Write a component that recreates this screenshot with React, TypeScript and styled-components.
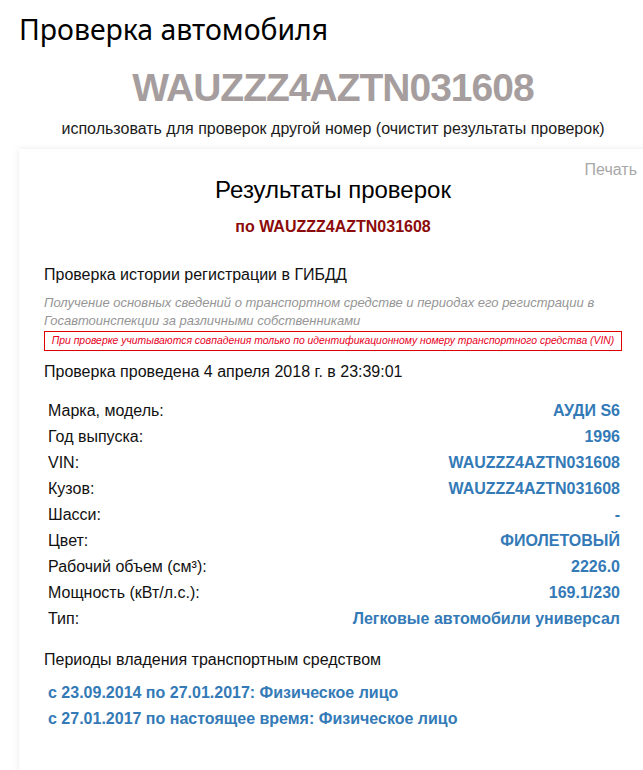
import styled, { createGlobalStyle } from "styled-components";

const Global = createGlobalStyle`
  html, body {
    margin: 0;
    padding: 0;
    background: #fff;
    overflow-x: hidden;
  }
  body {
    font-family: "Liberation Sans", Arial, sans-serif;
    color: #111;
  }
`;

const Page = styled.div`
  padding: 0 0 40px 19px;
  width: 628px;
`;

const Title = styled.h1`
  margin: 11px 0 0;
  font-family: "Noto Sans", "Open Sans", sans-serif;
  font-weight: 400;
  font-size: 28.4px;
  line-height: 36px;
  color: #000;
`;

const Vin = styled.div`
  margin-top: 18px;
  text-align: center;
  font-weight: 700;
  font-size: 39px;
  letter-spacing: -1px;
  line-height: 46px;
  color: #a69e9e;
`;

const Reset = styled.div`
  margin-top: 8px;
  text-align: center;
  font-size: 16px;
  line-height: 20px;
  color: #1a1a1a;
`;

const Card = styled.section`
  position: relative;
  margin-top: 10px;
  background: #fff;
  box-shadow: 0 0 7px rgba(0, 0, 0, 0.09);
  padding: 27px 25px 60px;
  display: flex;
  flex-direction: column;
`;

const PrintLink = styled.a`
  position: absolute;
  top: 11px;
  right: 10px;
  font-size: 16px;
  line-height: 20px;
  color: #a8a8a8;
  text-decoration: none;
  cursor: pointer;
`;

const CardTitle = styled.h2`
  margin: 0;
  text-align: center;
  font-weight: 400;
  font-size: 24px;
  line-height: 28px;
  color: #000;
`;

const CardSub = styled.div`
  margin-top: 13px;
  text-align: center;
  font-weight: 700;
  font-size: 16px;
  line-height: 20px;
  color: #8b0a0a;
`;

const SectionTitle = styled.div<{ $top: number }>`
  margin-top: ${(p) => p.$top}px;
  font-size: 16px;
  line-height: 20px;
  color: #111;
`;

const Note = styled.p`
  margin: 9px 0 0;
  font-style: italic;
  font-size: 13px;
  line-height: 18px;
  color: #959595;
`;

const Warning = styled.div`
  margin-top: 1px;
  border: 1px solid #e00000;
  padding: 3px 6px;
  text-align: center;
  font-style: italic;
  font-size: 10.4px;
  line-height: 12px;
  color: #e8001c;
  white-space: nowrap;
`;

const Checked = styled.div`
  margin-top: 11px;
  font-size: 16px;
  line-height: 20px;
  color: #111;
`;

const Table = styled.div`
  margin-top: 16px;
  padding: 0 2px 0 4px;
  display: flex;
  flex-direction: column;
`;

const Row = styled.div`
  display: flex;
  justify-content: space-between;
  font-size: 16px;
  line-height: 26px;
`;

const Label = styled.span`
  color: #111;
`;

const Value = styled.span`
  font-weight: 700;
  color: #337ab7;
`;

const Periods = styled.div`
  margin-top: 10px;
  padding-left: 4px;
  display: flex;
  flex-direction: column;
`;

const Period = styled.div`
  font-weight: 700;
  font-size: 16px;
  line-height: 26px;
  color: #337ab7;
`;

const vin = "WAUZZZ4AZTN031608";

const rows: [string, string][] = [
  ["Марка, модель:", "АУДИ S6"],
  ["Год выпуска:", "1996"],
  ["VIN:", vin],
  ["Кузов:", vin],
  ["Шасси:", "-"],
  ["Цвет:", "ФИОЛЕТОВЫЙ"],
  ["Рабочий объем (см³):", "2226.0"],
  ["Мощность (кВт/л.с.):", "169.1/230"],
  ["Тип:", "Легковые автомобили универсал"],
];

const periods = [
  "с 23.09.2014 по 27.01.2017: Физическое лицо",
  "с 27.01.2017 по настоящее время: Физическое лицо",
];

export default function App() {
  return (
    <>
      <Global />
      <Page>
        <Title>Проверка автомобиля</Title>
        <Vin>{vin}</Vin>
        <Reset>использовать для проверок другой номер (очистит результаты проверок)</Reset>
        <Card>
          <PrintLink>Печать</PrintLink>
          <CardTitle>Результаты проверок</CardTitle>
          <CardSub>по {vin}</CardSub>
          <SectionTitle $top={28}>Проверка истории регистрации в ГИБДД</SectionTitle>
          <Note>
            Получение основных сведений о транспортном средстве и периодах его регистрации в
            Госавтоинспекции за различными собственниками
          </Note>
          <Warning>
            При проверке учитываются совпадения только по идентификационному номеру транспортного
            средства (VIN)
          </Warning>
          <Checked>Проверка проведена 4 апреля 2018 г. в 23:39:01</Checked>
          <Table>
            {rows.map(([l, v]) => (
              <Row key={l}>
                <Label>{l}</Label>
                <Value>{v}</Value>
              </Row>
            ))}
          </Table>
          <SectionTitle $top={18}>Периоды владения транспортным средством</SectionTitle>
          <Periods>
            {periods.map((p) => (
              <Period key={p}>{p}</Period>
            ))}
          </Periods>
        </Card>
      </Page>
    </>
  );
}
